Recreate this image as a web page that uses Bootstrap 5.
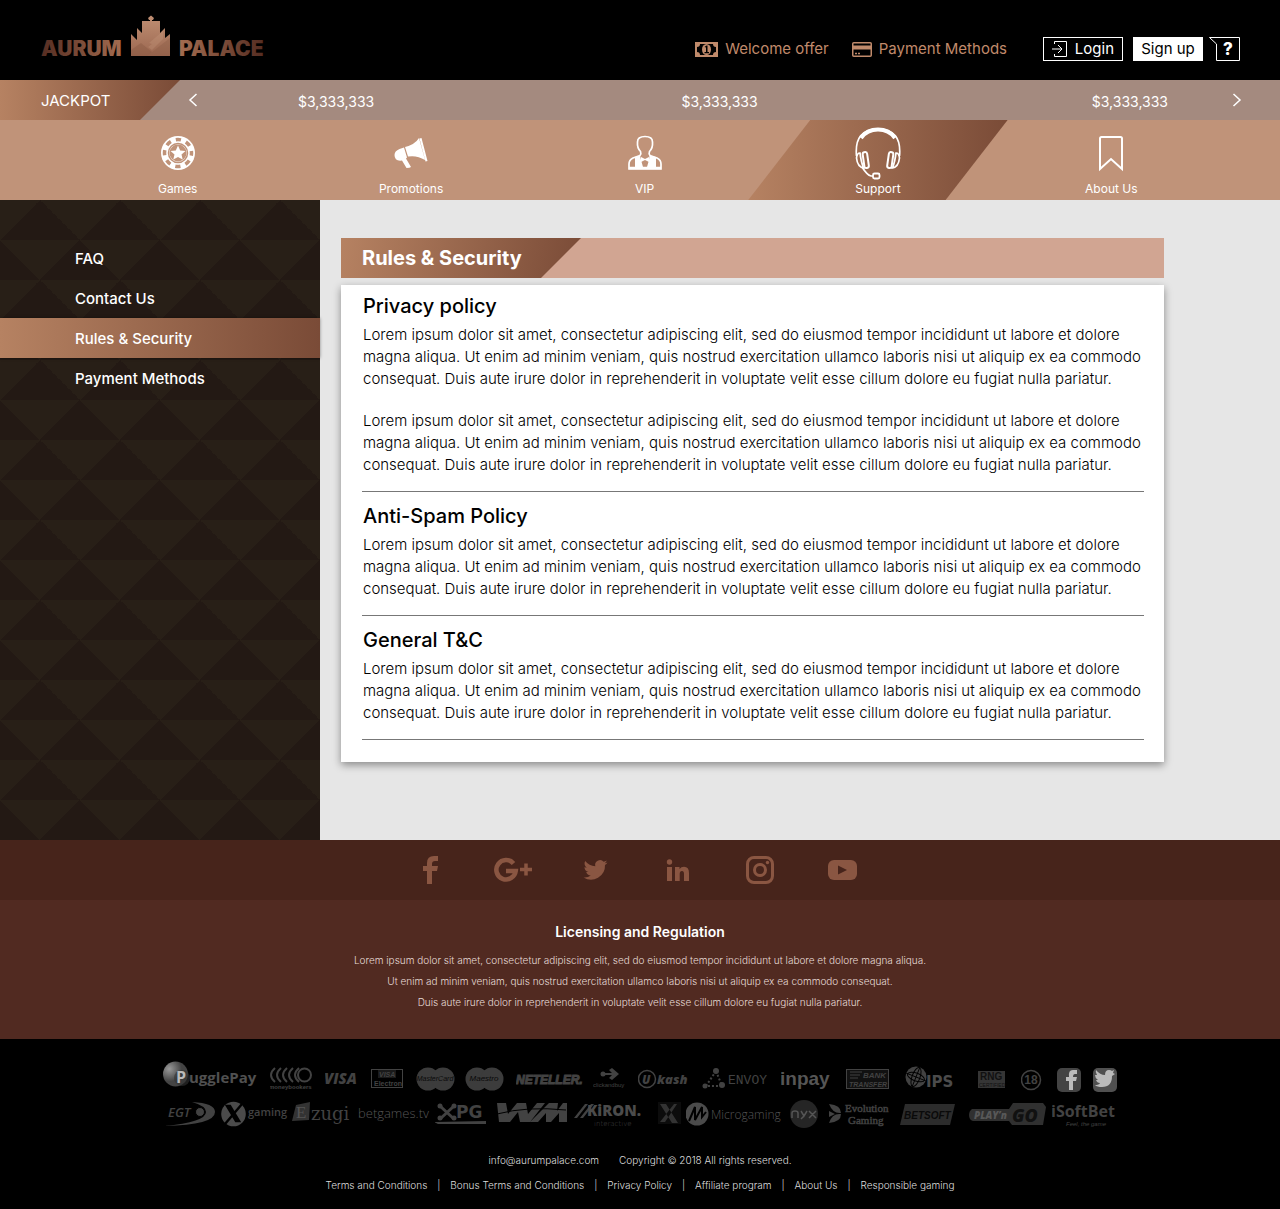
<!DOCTYPE html>
<html lang="en">
<head>
<meta charset="utf-8">
<meta name="viewport" content="width=device-width, initial-scale=1">
<title>Aurum Palace – Rules &amp; Security</title>
<link rel="stylesheet" href="https://cdn.jsdelivr.net/npm/bootstrap@5.3.0/dist/css/bootstrap.min.css">
<style>
:root{--copper:linear-gradient(90deg,#b68262,#7a4b37);}
body{font-family:Inter,"Liberation Sans",sans-serif;background:#000;color:#000;font-size:15px}
a{text-decoration:none}
svg{display:block;flex:none}
.topbar{height:80px;padding:0 40px 0 38px;background:#000}
.brand-mark{margin-top:14px}
.topbar-tools{margin-top:37px;height:24px}
.quick{color:#c08a6b;font-size:15px;gap:7px}
.quick + .quick{margin-left:23px}
.tool{height:24px;border:1px solid #fff;border-radius:0;background:#000;color:#fff;font-size:15px;line-height:22px;padding:0 8px}
.tool-login{width:80px;margin-left:36px;margin-right:10px}
.tool-signup{background:#fff;color:#000;width:70px;padding:0}
.tool-help{background:none;border:0;padding:0;margin-left:5px}
.jackpot{height:40px;padding-right:38px;background:#a48a7f;color:#fff;font-size:15px}
.jackpot-tag{width:180px;height:40px;padding:3px 0 0 41px;background:var(--copper);clip-path:polygon(0 0,100% 0,140px 100%,0 100%)}
.arrow{background:none;border:0;padding:0;color:#fff}
.jackpot-values{display:grid;grid-template-columns:384fr 411fr auto;margin:2px 64px 0 100px;font-size:14px}
.mainnav{height:80px;padding:0 52px 0 61px;background:#c09379}
.mainnav a{color:#fff;font-size:12px;line-height:16px;height:80px;position:relative;flex:1 1 0}
.mainnav a > *{position:relative}
.mainnav svg{height:61px}
.mainnav a.current::before{content:"";position:absolute;inset:0 -13px;background:var(--copper);clip-path:polygon(62px 0,100% 0,calc(100% - 62px) 100%,0 100%)}
.workspace{min-height:640px;background:#e6e6e6}
.sidebar{width:320px;flex:none;padding-top:38px;background:
 conic-gradient(from 180deg at 100% 50%,#231914 45deg,transparent 0) 0 0/80px 80px,
 conic-gradient(from 90deg at 0 50%,#281f17 45deg,transparent 0) 0 0/80px 80px,
 conic-gradient(from 135deg at 50% 0,#231914 90deg,transparent 0) 0 0/80px 80px,#281f17}
.sidebar a{color:#fff;font-weight:500;font-size:15px;line-height:20px;padding:11px 0 9px 75px}
.sidebar a.current{background:var(--copper);box-shadow:0 0 3px #0006}
.content-area{padding:38px 116px 70px 21px}
.title-bar{height:40px;background:#d1a592}
.title-bar h1{margin:0;width:240px;height:40px;line-height:40px;padding-left:21px;color:#fff;font-size:20px;font-weight:700;background:linear-gradient(100deg,#b68262,#7a4b37);clip-path:polygon(0 0,100% 0,200px 100%,0 100%)}
.sheet{margin-top:7px;background:#fff;padding:8px 20px 22px 21px;box-shadow:0 3px 8px #0006}
.sheet h2{font-size:20px;line-height:26px;font-weight:500;margin:0 0 5px;padding-left:1px}
.sheet p{font-weight:300;font-size:15px;line-height:22px;margin:0 0 20px;padding-left:1px;white-space:nowrap}
.sheet section{border-bottom:1px solid #777;margin-bottom:11px}
.sheet section p:last-child{margin-bottom:15px}
.sheet section:last-child{margin-bottom:0}
.social{height:60px;background:#47241b}
.social a{color:#8a5642}
.licensing{height:139px;background:#512a21;color:#fff;text-align:center;padding-top:23px}
.licensing h2{font-size:14px;line-height:18px;font-weight:600;margin:0 0 9px}
.licensing p{font-size:10px;line-height:21px;font-weight:300;margin:0;color:#e6dad6}
.site-footer{background:#000;color:#ddd;font-size:10px;font-weight:300;padding:18px 0 16px}
.site-footer a{color:#ddd}
.partners svg{fill:#424242;color:#424242}
.footer-info{margin-top:24px;line-height:15px;gap:20px}
.footer-links{margin-top:10px;line-height:15px}
.footer-links span{width:23px;text-align:center}
</style>
</head>
<body>
<header class="topbar d-flex justify-content-between align-items-start">
 <a href="#" class="brand-mark" aria-label="Aurum Palace">
  <svg width="240" height="48" viewBox="38 14 240 48" font-family="Inter" font-size="21" font-weight="900">
   <defs>
    <linearGradient id="gl"><stop offset="0" stop-color="#552d22"/><stop offset="1" stop-color="#a36c50"/></linearGradient>
    <linearGradient id="gr"><stop offset="0" stop-color="#a36c50"/><stop offset="1" stop-color="#552d22"/></linearGradient>
    <linearGradient id="gp" x2="0" y2="1"><stop offset="0" stop-color="#c08f73"/><stop offset="1" stop-color="#9b6750"/></linearGradient>
   </defs>
   <text x="41" y="56" fill="url(#gl)">AURUM</text>
   <path d="M142 21h8v-1h-1l-1-2 3-2.500 3 2.500-1 2h-1v1h8v12l5-5v10l5-4v22h-39V34l6 6V28l5 5z" fill="url(#gp)"/>
   <path d="M131 50l10-7 11 9-5 4h-16z" fill="#80523d" opacity=".35"/><path d="M149 43l14-12v8l-11 11-4-3 4-3z" fill="#d0a588" opacity=".25"/><path d="M170 38l-23 18h23z" fill="#875841" opacity=".35"/>
   <text x="179" y="56" fill="url(#gr)">PALACE</text>
  </svg>
 </a>
 <div class="topbar-tools d-flex align-items-center">
  <a href="#" class="quick d-flex align-items-center"><svg width="23" height="15" viewBox="0 0 23 15"><path d="M0 0h23v15H0z" fill="#c08a6b"/><path d="M5 2h13q0 3 3 3v5q-3 0-3 3H5q0-3-3-3V5q3 0 3-3z" fill="#000"/><ellipse cx="11.500" cy="7.500" rx="4.500" ry="5.500" fill="#c08a6b"/><path d="M9.500 5l2-1.500h1V10h1.500v1.200H9.500V10H11V5.500z" fill="#000"/></svg>Welcome offer</a>
  <a href="#" class="quick d-flex align-items-center"><svg width="20" height="15" viewBox="0 0 20 15" fill="none" stroke="#c08a6b"><rect x=".75" y=".75" width="18.500" height="13.500" rx="1" stroke-width="1.500"/><path d="M0 5.500h20" stroke-width="4"/><path d="M3 11.500h2m1 0h2" stroke-width="1.500"/></svg>Payment Methods</a>
  <button type="button" class="tool tool-login d-flex align-items-center justify-content-between"><svg width="16" height="18" viewBox="0 0 16 18" fill="none" stroke="#fff"><path d="M2.500 4V1.500h12v15h-12V14M0 9h10M6 5l4 4-4 4"/></svg>Login</button>
  <button type="button" class="tool tool-signup">Sign up</button>
  <button type="button" class="tool-help" aria-label="Help"><svg width="32" height="24" viewBox="0 0 32 24"><path d="M1.500.500h30v23h-23V7z" fill="#000" stroke="#fff"/><text x="20" y="18" text-anchor="middle" font-size="17" font-weight="800" fill="#fff">?</text></svg></button>
 </div>
</header>

<section class="jackpot d-flex align-items-center">
 <div class="jackpot-tag d-flex align-items-center">JACKPOT</div>
 <button type="button" class="arrow ms-2" aria-label="Previous"><svg width="10" height="14" viewBox="0 0 10 14" fill="none" stroke="currentColor" stroke-width="1.500"><path d="M8.500 1L2 7l6.500 6"/></svg></button>
 <div class="jackpot-values flex-grow-1"><span>$3,333,333</span><span>$3,333,333</span><span>$3,333,333</span></div>
 <button type="button" class="arrow" aria-label="Next"><svg width="10" height="14" viewBox="0 0 10 14" fill="none" stroke="currentColor" stroke-width="1.500"><path d="M1.500 1L8 7l-6.500 6"/></svg></button>
</section>

<nav class="mainnav d-flex">
 <a href="#" class="d-flex flex-column align-items-center"><svg width="36" viewBox="0 0 36 61"><g transform="translate(18 33)"><circle r="17" fill="#fff"/><circle r="13.500" fill="none" stroke="#c09379" stroke-width="3.500" stroke-dasharray="5.301" stroke-dashoffset="2.650"/><circle r="9.500" fill="none" stroke="#c09379" stroke-width="1.500"/><circle r="8.500" fill="#c09379"/><path d="M0-7.500l2.200 4.900 5.300.5-4 3.500 1.200 5.200L0 4l-4.700 2.600 1.200-5.200-4-3.500 5.300-.5z" fill="#fff"/></g></svg><span>Games</span></a>
 <a href="#" class="d-flex flex-column align-items-center"><svg width="34" viewBox="0 0 34 61" fill="#fff"><path d="M.5 35q0-4 5-6l4.500-1.500 3 10-1 1L17 47q-1 1-4.500 1L8 40.500q-7.500 1-7.500-5.500zM11 27q10-2.500 14-9l6 22q-8-5-17-3.500zM25.500 18.500l2-.5L33.500 41l-2 .5z"/></svg><span>Promotions</span></a>
 <a href="#" class="d-flex flex-column align-items-center"><svg width="36" viewBox="0 0 36 61" fill="none" stroke="#fff" stroke-width="1.700"><path d="M13 35.500q1.500-1.500.5-4Q10 28 10.500 22q0-5.500 7.500-5.500t7.500 5.500q.5 6-3 9.500-1 2.500.5 4l7 2.500q4 2 4 6v5H2v-5q0-4 4-6z"/><path d="M8 37l5-1.500 1 4.500 2 7h4l2-7 .5-4.500L29 37v12H8z" fill="#fff" stroke="none"/><path d="M2 48h32" stroke-width="2.500"/><path d="M14 37l4 2 4-2v5l-4-2-4 2z" fill="#fff" stroke="none"/></svg><span>VIP</span></a>
 <a href="#" class="current d-flex flex-column align-items-center" aria-current="page"><svg width="46" viewBox="0 0 46 61" fill="none" stroke="#fff" stroke-width="1.700"><path d="M1.500 36Q-1 9 23 9t21.500 27"/><path d="M6 18Q12 9.500 23 9.500T40 18" stroke-width="4"/><path d="M5 33q-3 0-3.500 5 1 9 7 10-2.500-6-3.500-15zM41 33q3 0 3.500 5-1 9-7 10 2.500-6 3.500-15z"/><rect x="8.500" y="32" width="4.500" height="16" rx="2" transform="rotate(-8 11 40)" stroke-width="2"/><rect x="33" y="32" width="4.500" height="16" rx="2" transform="rotate(8 35 40)" stroke-width="2"/><path d="M7 47q5 8 9 9h2"/><rect x="18" y="53.500" width="6.500" height="5" rx="1.500" stroke-width="1.800"/></svg><span>Support</span></a>
 <a href="#" class="d-flex flex-column align-items-center"><svg width="26" viewBox="0 0 26 61" fill="none" stroke="#fff" stroke-width="2"><path d="M2 49V18.500q0-1.500 1.500-1.500h19q1.500 0 1.500 1.500V49L13 39z"/></svg><span>About Us</span></a>
</nav>

<div class="workspace d-flex">
 <aside class="sidebar"><nav class="d-flex flex-column"><a href="#">FAQ</a><a href="#">Contact Us</a><a href="#" class="current" aria-current="page">Rules &amp; Security</a><a href="#">Payment Methods</a></nav></aside>
 <main class="content-area flex-grow-1">
  <div class="title-bar"><h1>Rules &amp; Security</h1></div>
  <div class="sheet">
   <section><h2>Privacy policy</h2>
    <p>Lorem ipsum dolor sit amet, consectetur adipiscing elit, sed do eiusmod tempor incididunt ut labore et dolore<br>magna aliqua. Ut enim ad minim veniam, quis nostrud exercitation ullamco laboris nisi ut aliquip ex ea commodo<br>consequat. Duis aute irure dolor in reprehenderit in voluptate velit esse cillum dolore eu fugiat nulla pariatur.</p>
    <p>Lorem ipsum dolor sit amet, consectetur adipiscing elit, sed do eiusmod tempor incididunt ut labore et dolore<br>magna aliqua. Ut enim ad minim veniam, quis nostrud exercitation ullamco laboris nisi ut aliquip ex ea commodo<br>consequat. Duis aute irure dolor in reprehenderit in voluptate velit esse cillum dolore eu fugiat nulla pariatur.</p></section>
   <section><h2>Anti-Spam Policy</h2>
    <p>Lorem ipsum dolor sit amet, consectetur adipiscing elit, sed do eiusmod tempor incididunt ut labore et dolore<br>magna aliqua. Ut enim ad minim veniam, quis nostrud exercitation ullamco laboris nisi ut aliquip ex ea commodo<br>consequat. Duis aute irure dolor in reprehenderit in voluptate velit esse cillum dolore eu fugiat nulla pariatur.</p></section>
   <section><h2>General T&amp;C</h2>
    <p>Lorem ipsum dolor sit amet, consectetur adipiscing elit, sed do eiusmod tempor incididunt ut labore et dolore<br>magna aliqua. Ut enim ad minim veniam, quis nostrud exercitation ullamco laboris nisi ut aliquip ex ea commodo<br>consequat. Duis aute irure dolor in reprehenderit in voluptate velit esse cillum dolore eu fugiat nulla pariatur.</p></section>
  </div>
 </main>
</div>

<div class="social d-flex justify-content-center align-items-center">
 <a href="#" aria-label="Facebook"><svg width="71" height="30" viewBox="422 855 71 30" fill="currentColor"><path d="M427 884v-13h-4v-5h4v-3q0-7 7-7h4v5h-3q-3 0-3 3v2h6l-1 5h-5v13z"/></svg></a>
 <a href="#" aria-label="Google Plus"><svg width="89" height="30" viewBox="493 855 89 30" fill="none" stroke="currentColor"><path d="M513.500 863.500a9.700 9.700 0 1 0 2.200 7.500H506" stroke-width="4.600"/><path d="M520 869.500h12m-6-6v12" stroke-width="3.500"/></svg></a>
 <a href="#" aria-label="Twitter"><svg width="84" height="30" viewBox="582 855 84 30" fill="currentColor"><path d="M607.500 862.400a10 10 0 0 1-2.800.8 5 5 0 0 0 2.100-2.700 10 10 0 0 1-3.100 1.200 4.900 4.900 0 0 0-8.400 4.500 14 14 0 0 1-10.100-5.200 4.900 4.900 0 0 0 1.500 6.600 5 5 0 0 1-2.200-.6 4.900 4.900 0 0 0 3.900 4.900 5 5 0 0 1-2.200.1 4.900 4.900 0 0 0 4.600 3.400 10 10 0 0 1-7.300 2 14 14 0 0 0 21.500-12.400 10 10 0 0 0 2.500-2.600z"/></svg></a>
 <a href="#" aria-label="LinkedIn"><svg width="79" height="30" viewBox="666 855 79 30" fill="currentColor"><circle cx="669.500" cy="862" r="2.700"/><path d="M667 867h5v14h-5zM675 867h4.500v2q1.500-2.300 4.500-2.300 5 0 5 6.300v8h-5v-7q0-3-2-3-2.300 0-2.300 3v7H675z"/></svg></a>
 <a href="#" aria-label="Instagram"><svg width="82" height="30" viewBox="745 855 82 30" fill="none" stroke="currentColor" stroke-width="3"><rect x="747.500" y="857.500" width="25" height="25" rx="6.500"/><circle cx="760" cy="870" r="5.500"/><circle cx="767.500" cy="862.500" r="1.700" fill="currentColor" stroke="none"/></svg></a>
 <a href="#" aria-label="YouTube"><svg width="31" height="30" viewBox="827 855 31 30"><rect x="828" y="860" width="29" height="20" rx="6" fill="currentColor"/><path d="M838 865.500v9l9-4.500z" fill="#47241b"/></svg></a>
</div>

<section class="licensing"><h2>Licensing and Regulation</h2><p>Lorem ipsum dolor sit amet, consectetur adipiscing elit, sed do eiusmod tempor incididunt ut labore et dolore magna aliqua.</p><p>Ut enim ad minim veniam, quis nostrud exercitation ullamco laboris nisi ut aliquip ex ea commodo consequat.</p><p>Duis aute irure dolor in reprehenderit in voluptate velit esse cillum dolore eu fugiat nulla pariatur.</p></section>

<footer class="site-footer">
 <div class="partners">
  <div class="d-flex justify-content-center">
   <svg width="107" height="40" viewBox="162 1057 107 40" font-family="Open Sans" font-weight="700"><defs><radialGradient id="ball" cx=".25" cy=".3"><stop offset="0" stop-color="#999"/><stop offset="1" stop-color="#444"/></radialGradient></defs><circle cx="174.500" cy="1074" r="12.500" fill="url(#ball)"/><circle cx="181" cy="1078" r="8" fill="#333" opacity=".6"/><text x="175" y="1083" font-size="16" fill="#bbb">P</text><text x="188" y="1083" font-size="15" fill="#505050">ugglePay</text></svg>
   <svg width="55" height="40" viewBox="269 1057 55 40"><g fill="none" stroke="currentColor" stroke-width="2"><path d="M274 1068q-8 7 0 14M280 1068q-8 7 0 14M286 1068q-8 7 0 14M292 1068q-8 7 0 14M298 1068q-8 7 0 14"/><circle cx="303.500" cy="1075" r="6.500"/></g><text x="268" y="1089" font-family="Liberation Sans" font-weight="700" font-size="6">moneybookers</text></svg>
   <svg width="46" height="40" viewBox="324 1057 46 40"><text x="323" y="1084" font-family="Open Sans" font-size="15" font-weight="800" font-style="italic">VISA</text></svg>
   <svg width="45" height="40" viewBox="370 1057 45 40" font-family="Liberation Sans" font-weight="700"><rect x="370.500" y="1069.500" width="31" height="18" fill="none" stroke="currentColor"/><path d="M377 1070h18v8h-18z" opacity=".4"/><text x="378" y="1077" font-size="7" font-style="italic">VISA</text><text x="373" y="1086" font-size="7">Electron</text></svg>
   <svg width="49" height="40" viewBox="415 1057 49 40"><circle cx="427" cy="1079" r="11.500" fill="#3c3c3c"/><circle cx="442" cy="1079" r="11.500" fill="#3c3c3c"/><text x="434" y="1081" text-anchor="middle" font-family="Liberation Sans" font-size="7" font-style="italic" fill="#0a0a0a">MasterCard</text></svg>
   <svg width="51" height="40" viewBox="464 1057 51 40"><circle cx="476" cy="1079" r="11.500" fill="#3c3c3c"/><circle cx="491" cy="1079" r="11.500" fill="#3c3c3c"/><text x="483" y="1081" text-anchor="middle" font-family="Liberation Sans" font-size="8" font-style="italic" fill="#0a0a0a">Maestro</text></svg>
   <svg width="77" height="40" viewBox="515 1057 77 40"><text x="515" y="1084" font-family="Liberation Sans" font-size="12" font-weight="700" font-style="italic" stroke="currentColor">NETELLER.</text></svg>
   <svg width="45" height="40" viewBox="592 1057 45 40"><circle cx="602" cy="1074" r="2.500"/><path d="M604 1073h7l-3-3 3-2 7 6-7 6-3-2 3-3h-7z"/><text x="592" y="1087" font-family="Liberation Sans" font-size="6">clickandbuy</text></svg>
   <svg width="64" height="40" viewBox="637 1057 64 40" font-family="Open Sans" font-weight="800" font-style="italic"><circle cx="646" cy="1079" r="8.500" fill="none" stroke="currentColor" stroke-width="1.500"/><text x="641" y="1084" font-size="12">U</text><text x="656" y="1084" font-size="13">kash</text></svg>
   <svg width="79" height="40" viewBox="701 1057 79 40"><circle cx="715" cy="1071" r="3"/><circle cx="704" cy="1086" r="2.500"/><circle cx="721" cy="1085" r="3"/><path d="M715 1071l-10 15h16z" fill="none" stroke="currentColor" stroke-width="2" stroke-dasharray="2 2"/><text x="727" y="1084" font-family="Liberation Mono" font-size="13">ENVOY</text></svg>
   <svg width="65" height="40" viewBox="780 1057 65 40"><text x="779" y="1085" font-family="Liberation Sans" font-size="19" font-weight="700" fill="#555">inpay</text></svg>
   <svg width="59" height="40" viewBox="845 1057 59 40" font-family="Liberation Sans" font-weight="700" font-style="italic" font-size="8"><rect x="845.500" y="1069.500" width="42" height="19" fill="#111" stroke="currentColor"/><path d="M849 1072h12M849 1075h10M849 1078h8" stroke="currentColor"/><text x="862" y="1078">BANK</text><text x="848" y="1087" font-size="7">TRANSFER</text></svg>
   <svg width="73" height="40" viewBox="904 1057 73 40"><circle cx="915" cy="1077" r="10.500"/><g fill="none" stroke="#000"><ellipse cx="915" cy="1077" rx="4" ry="10" transform="rotate(20 915 1077)"/><ellipse cx="915" cy="1077" rx="9" ry="4" transform="rotate(20 915 1077)"/><path d="M911 1087l8-20M905 1073l20 8"/></g><text x="925" y="1087" font-family="DejaVu Sans" font-size="15" font-weight="700" fill="#4b4b4b">IPS</text></svg>
   <svg width="43" height="40" viewBox="977 1057 43 40"><path d="M977 1071h27v17h-27z" fill="#353535"/><text x="979" y="1080" font-family="Liberation Sans" font-weight="700" font-size="10" fill="#111">RNG</text><text x="978" y="1087" font-family="Liberation Sans" font-size="5" fill="#111">CERTIFIED</text></svg>
   <svg width="36" height="40" viewBox="1020 1057 36 40"><circle cx="1030" cy="1080" r="9.500" fill="none" stroke="currentColor" stroke-width="1.500"/><text x="1030" y="1084" text-anchor="middle" font-family="Liberation Sans" font-size="12" font-weight="700">18</text></svg>
   <svg width="36" height="40" viewBox="1056 1057 36 40"><rect x="1056" y="1068" width="24" height="24" rx="5" fill="#444"/><path d="M1068 1090v-9h-3v-4h3q-1-8 5-7h3v4h-2q-2 0-2 3h4l-1 4h-3v9z" fill="#bbb"/></svg>
   <svg width="25" height="40" viewBox="1092 1057 25 40"><rect x="1092" y="1068" width="24" height="24" rx="5" fill="#505050"/><path d="M1114 1074l-3 2q0 11-10 11-5 0-7-2 4 0 5-2-3 0-4-3h2q-3-2-3-5h2q-2-3-1-5 4 5 9 5 0-5 4-5 2 0 3 1l2-1-1 3z" fill="#bbb"/></svg>
  </div>
  <div class="d-flex justify-content-center">
   <svg width="59" height="32" viewBox="162 1098 59 32"><text x="168" y="1118" font-family="Open Sans" font-size="13" font-weight="600" font-style="italic">EGT</text><path d="M192 1103q23 1 23 10 0 13-51 14 42-4 42-14 0-6-14-10z"/><circle cx="200" cy="1113" r="4.500" stroke="#000"/></svg>
   <svg width="71" height="32" viewBox="221 1098 71 32"><circle cx="233.500" cy="1115" r="12.300" fill="#4b4b4b"/><path d="M227 1107h3l9 15h-3zM242 1105l-17 20" fill="#000" stroke="#000" stroke-width="2.500"/><text x="248" y="1117" font-family="Open Sans" font-size="11" font-weight="600">gaming</text></svg>
   <svg width="66" height="32" viewBox="292 1098 66 32"><path d="M296 1106l14-3-1 18-17 1z" fill="#333"/><text x="296" y="1119" font-family="Liberation Serif" font-size="17" fill="#555">E</text><text x="311" y="1121" font-family="DejaVu Serif" font-size="18">zugi</text></svg>
   <svg width="77" height="32" viewBox="358 1098 77 32"><text x="358" y="1119" font-family="Open Sans" font-size="13" fill="#555">betgames.tv</text></svg>
   <svg width="62" height="32" viewBox="435 1098 62 32"><path d="M440 1107l14 13M454 1107l-14 13" stroke="currentColor" stroke-width="3"/><circle cx="440" cy="1107" r="2.500"/><circle cx="454" cy="1107" r="2.500"/><circle cx="440" cy="1119" r="2.500"/><circle cx="454" cy="1119" r="2.500"/><text x="456" y="1119" font-family="DejaVu Sans" font-weight="700" font-size="17">PG</text><path d="M434 1123l52-1v3h-48z"/></svg>
   <svg width="77" height="32" viewBox="497 1098 77 32"><path d="M497 1104h9l2 11 9-11h9l2 11 9-11h8l-15 19h-10l-2-10-8 10h-11zM549 1104h9l-1 8 6-8h4v19h-8v-9l-8 9h-5v-9l-8 9h-8z"/><path d="M497 1115q30-8 69-4" fill="none" stroke="#000"/></svg>
   <svg width="80" height="32" viewBox="574 1098 80 32"><path d="M574 1119l11-14h3l-11 14zM580 1119l11-14h3l-11 14z"/><text x="587" y="1117" font-family="Open Sans" font-size="15" font-weight="800" fill="#4b4b4b">KiRON.</text><text x="594" y="1127" font-family="DejaVu Sans" font-size="7">interactive</text></svg>
   <svg width="32" height="32" viewBox="654 1098 32 32"><path d="M658 1103h23v22h-23z" fill="#0c0c0c"/><path d="M660 1105h6l12 19h-6zM677 1105h-3l-14 18h5z" fill="#333"/></svg>
   <svg width="104" height="32" viewBox="686 1098 104 32"><circle cx="697" cy="1115" r="11.500" fill="#4b4b4b"/><path d="M689 1122l6-14v13l7-13v10l4-5" fill="none" stroke="#000" stroke-width="2"/><text x="711" y="1120" font-family="Open Sans" font-size="12" fill="#555">Microgaming</text></svg>
   <svg width="38" height="32" viewBox="790 1098 38 32"><circle cx="804" cy="1115" r="14" fill="#252525"/><path d="M792 1119v-5q0-2 3-2t3 2v5m3-7l3 5 3-5m-3 5l-3 3m8-8l7 7m0-7l-7 7" stroke="#555" stroke-width="1.500" fill="none"/></svg>
   <svg width="72" height="32" viewBox="828 1098 72 32" font-family="Liberation Serif" font-size="11"><path d="M829 1105q12 1 12 9-8 1-12-9zM829 1124q12-1 12-9-9-1-12 9zM829 1112l6 3-6 3z"/><text x="845" y="1113" stroke="currentColor" stroke-width=".5">Evolution</text><text x="848" y="1125" stroke="currentColor" stroke-width=".5">Gaming</text></svg>
   <svg width="69" height="32" viewBox="900 1098 69 32"><path d="M905 1105h50l-5 21h-50z" fill="#2c2c2c"/><text x="904" y="1120" font-family="Liberation Sans" font-weight="700" font-style="italic" font-size="10" fill="#0a0a0a">BETSOFT</text></svg>
   <svg width="83" height="32" viewBox="969 1098 83 32" font-family="Open Sans" font-weight="800" font-style="italic"><path d="M972 1110h37l4-6h30l3 4-3 18h-31l-3-4h-36q-4-1-4-6 0-4 3-6z" fill="#303030"/><text x="974" y="1120" font-size="10" fill="#585858">PLAY’n</text><text x="1012" y="1123" font-size="18" fill="#111">GO</text></svg>
   <svg width="66" height="32" viewBox="1052 1098 66 32"><text x="1051" y="1118" font-family="Open Sans" font-size="16" font-weight="700">iSoftBet</text><text x="1066" y="1127" font-family="Liberation Sans" font-style="italic" font-size="6">Feel, the game</text></svg>
  </div>
 </div>
 <div class="footer-info d-flex justify-content-center"><a href="#">info@aurumpalace.com</a><span>Copyright © 2018 All rights reserved.</span></div>
 <nav class="footer-links d-flex justify-content-center"><a href="#">Terms and Conditions</a><span>|</span><a href="#">Bonus Terms and Conditions</a><span>|</span><a href="#">Privacy Policy</a><span>|</span><a href="#">Affiliate program</a><span>|</span><a href="#">About Us</a><span>|</span><a href="#">Responsible gaming</a></nav>
</footer>
<script src="https://cdn.jsdelivr.net/npm/bootstrap@5.3.0/dist/js/bootstrap.bundle.min.js"></script>
</body>
</html>
